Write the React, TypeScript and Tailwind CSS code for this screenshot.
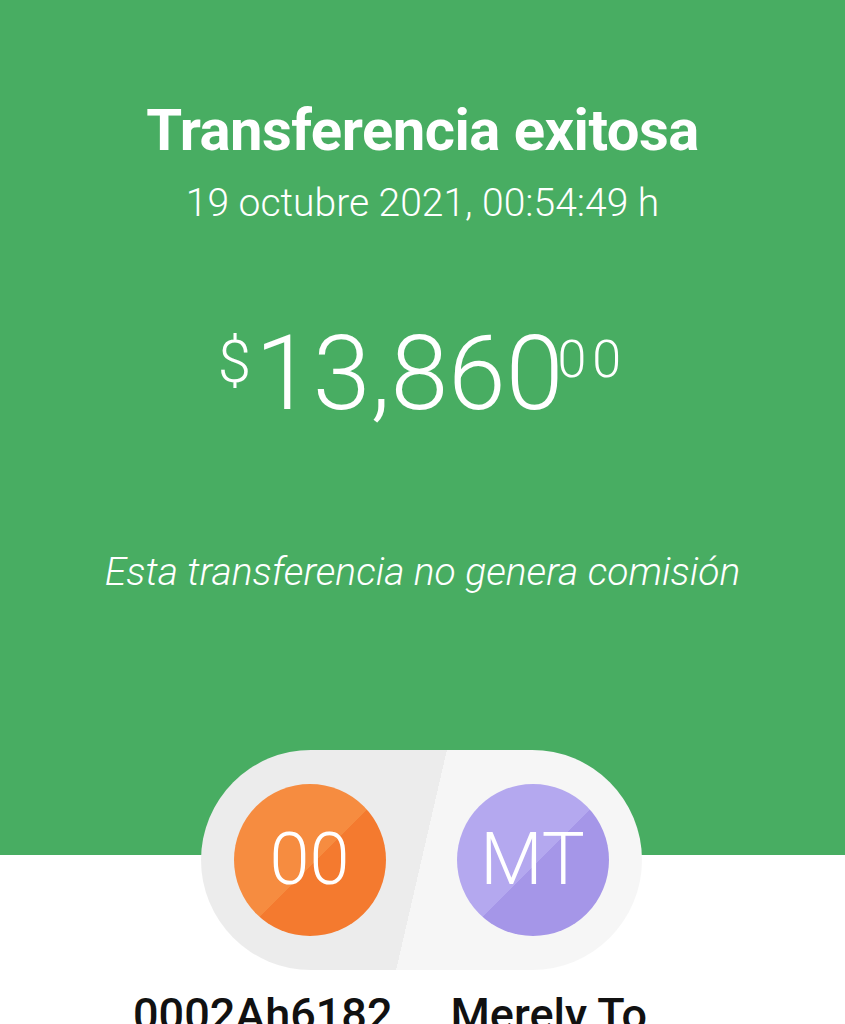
function Avatar({ initials, light, dark }: { initials: string; light: string; dark: string }) {
  return (
    <div
      className="w-[152px] h-[152px] rounded-full flex items-center justify-center text-white text-[72px] font-light"
      style={{ background: `linear-gradient(135deg, ${light} 52%, ${dark} 52%)` }}
    >
      {initials}
    </div>
  );
}

export default function App() {
  return (
    <div className="w-[845px] h-[1024px] overflow-hidden bg-white font-['Roboto',sans-serif]">
      {/* Cabecera verde */}
      <section className="bg-[#48ad62] h-[855px] flex flex-col items-center text-white pt-[96px]">
        <h1 className="text-[58px] leading-[68px] font-bold tracking-[-0.5px]">Transferencia exitosa</h1>
        <p className="mt-[17px] text-[39px] leading-[44px] font-light">19 octubre 2021, 00:54:49 h</p>

        <div className="mt-[103px] flex items-start font-light leading-none">
          <span className="text-[60px] mt-[4px] mr-[4px]">$</span>
          <span className="text-[104px] leading-[92px]">13,860</span>
          <span className="text-[52px] mt-[6px] -ml-[6px] tracking-[6px]">00</span>
        </div>

        <p className="mt-[129px] text-[39px] leading-[46px] font-light italic">Esta transferencia no genera comisión</p>
      </section>

      {/* Pastilla de origen / destino */}
      <div className="-mt-[105px] flex justify-center pr-[3px]">
        <div className="w-[441px] h-[220px] rounded-full bg-[linear-gradient(103deg,#ececec_50%,#f6f6f6_50%)] flex items-center justify-between px-[33px]">
          <Avatar initials="00" light="#f68c40" dark="#f47a2f" />
          <Avatar initials="MT" light="#b4a8ef" dark="#a596e8" />
        </div>
      </div>

      <div className="mt-[19px] flex pl-[133px] gap-[58px] text-[45px] font-medium text-[#111] leading-[52px]">
        <span>0002Ah6182</span>
        <span>Merely To</span>
      </div>
    </div>
  );
}
